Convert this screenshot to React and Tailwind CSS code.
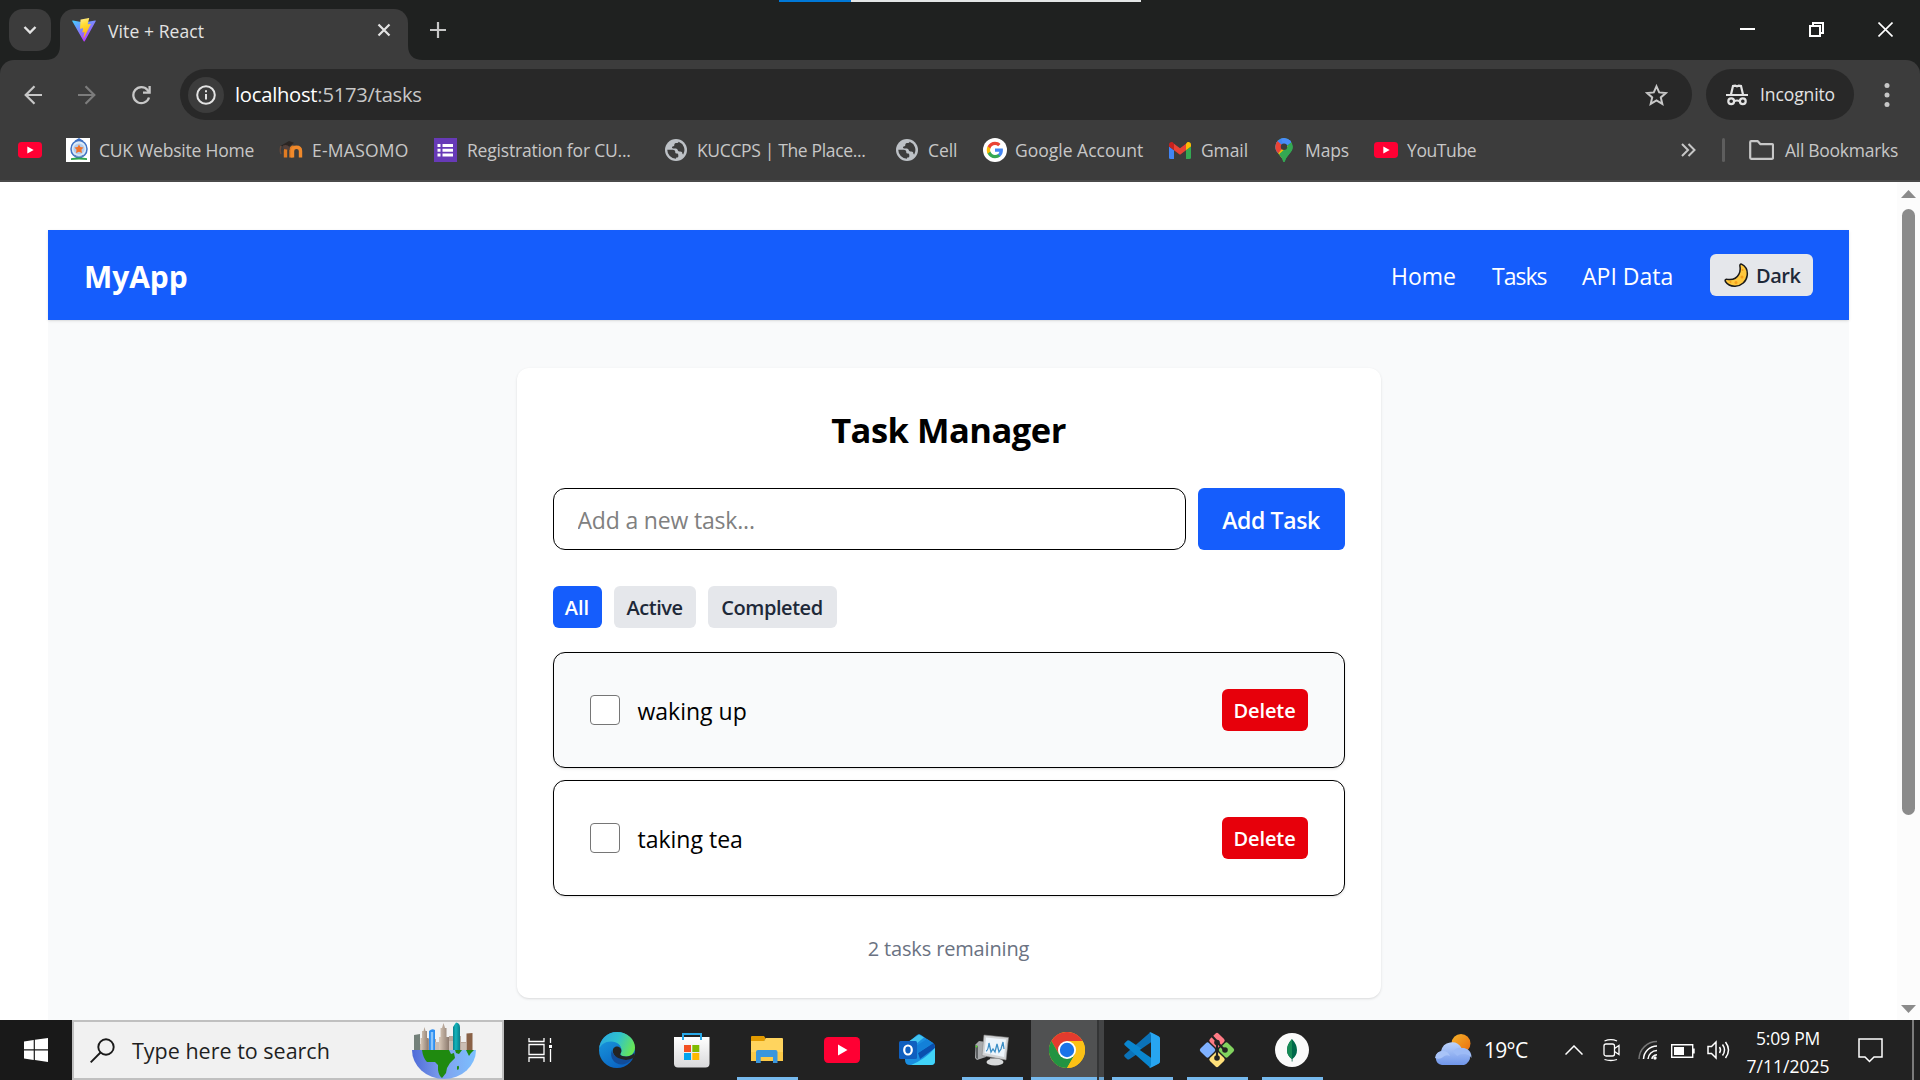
import React from "react";

/* ---------- Brand and browser icons ---------- */

const ViteLogo = () => (
  <svg width="24" height="24" viewBox="0 0 24 24">
    <defs>
      <linearGradient id="viteA" x1="0" y1="0" x2="0.6" y2="1">
        <stop offset="0" stopColor="#41d1ff" />
        <stop offset="1" stopColor="#bd34fe" />
      </linearGradient>
      <linearGradient id="viteB" x1="0.4" y1="0" x2="0.6" y2="1">
        <stop offset="0" stopColor="#ffea83" />
        <stop offset="0.3" stopColor="#ffdd35" />
        <stop offset="1" stopColor="#ffa800" />
      </linearGradient>
    </defs>
    <path d="M23.700 3.300 12.700 23.200c-.2.400-.8.400-1 0L.3 3.300c-.3-.4.100-1 .600-.9L12 4.400l11.100-2c.5-.1.900.4.600.9z" fill="url(#viteA)" />
    <path d="m17 0-8.200 1.600c-.2 0-.3.200-.3.300L8 10.500c0 .2.200.4.400.3l2.300-.5c.2 0 .4.200.4.400l-.7 3.300c0 .3.200.4.400.4l1.400-.4c.2-.1.500.1.400.3l-1.100 5.200c-.1.300.4.500.5.200l.1-.1 6.700-13.300c.1-.2-.1-.5-.4-.4l-2.300.4c-.2 0-.4-.2-.4-.4L17.200.3c.1-.2-.1-.3-.2-.3z" fill="url(#viteB)" />
  </svg>
);

const YouTube = ({ w = 24, h = 16, r = 4 }) => (
  <svg width={w} height={h} viewBox="0 0 36 26" preserveAspectRatio="none">
    <rect width="36" height="26" rx={r * 1.4} fill="#ff0033" />
    <path d="M14 7.500v11L23.500 13z" fill="#fff" />
  </svg>
);

const CukLogo = () => (
  <svg width="24" height="24" viewBox="0 0 24 24">
    <rect width="24" height="24" fill="#fff" />
    <ellipse cx="13" cy="11" rx="8" ry="8.500" fill="#dcebf8" stroke="#3f72c4" strokeWidth="1.500" />
    <path d="M9 3.500 13 1l4 2.500" stroke="#3f72c4" strokeWidth="1.500" fill="none" />
    <circle cx="13" cy="11" r="5.600" fill="#b3cdee" />
    <path d="m13 6.500 1.400 2.600 3.100.3-2.100 2.300.6 3.300-3-1.300-3 1.300.6-3.300-2.100-2.300 3.100-.3z" fill="#f0722a" />
    <path d="M8.500 16.500q4.500 3 9 0v2h-9z" fill="#5b83bd" />
    <path d="M5 20.200q3-.8 8-.8t8 .8v1.800q-3-.6-8-.6t-8 .6z" fill="#2fa64d" />
  </svg>
);

const MoodleLogo = () => (
  <svg width="24" height="20" viewBox="0 0 24 20">
    <path d="M6.500 17.500V11q0-2.500 1-3.500M12 17.500V10.500q0-3.500 2.500-3.500" stroke="#e07b22" strokeWidth="3.400" fill="none" />
    <path d="M13.500 17.500V11q0-3.800 4-3.800t4 3.800v6.500" stroke="#f0892b" strokeWidth="3.400" fill="none" />
    <path d="m1.500 6 8.500-5 5 1.800-5 4z" fill="#2b2522" />
    <path d="M2 6q-1.500 4 0 8" stroke="#6b4a39" strokeWidth="1.400" fill="none" />
    <path d="M4 5.500q4-1.500 6.500 1.500v3L4.500 9z" fill="#54403a" />
  </svg>
);

const FormsLogo = () => (
  <svg width="23" height="24" viewBox="0 0 23 24">
    <rect width="23" height="24" fill="#673ab7" />
    <path d="M3.500 6h3v3h-3zM8.500 6h10.500v3H8.500zM3.500 10.700h3v3h-3zM8.500 10.700h10.500v3H8.500zM3.500 15.400h3v3h-3zM8.500 15.400h10.500v3H8.500z" fill="#fff" />
  </svg>
);

const Globe = () => (
  <svg width="22" height="22" viewBox="0 0 22 22">
    <circle cx="11" cy="11" r="11" fill="#bdc1c6" />
    <path d="M2.300 10.700h5.400c2 0 2.600 1 2.600 2.700 0 .8.500 1 1.500 1 1.100 0 1.500.5 1.500 1.600v1.200c0 1-.7 1.400-1.500 1.400-.6 0-.8.4-.8 1.100A8.800 8.800 0 0 1 2.300 10.700zM13.600 2.700c-.3 1-.9 1.400-1.900 1.400-1.500 0-2.400.6-2.400 1.900 0 1-.5 1.300-1.500 1.400-.9.100-1 .9-.6 1.500.4.500 1.200.7 2.800.7 1.600 0 2.500.6 2.900 1.900.3.900 1 1 2.300 1 1.500 0 2.100.7 2.100 1.800 0 .7.300 1 .9 1.100a8.800 8.800 0 0 0-4.600-12.700z" fill="#3c3c3c" />
  </svg>
);

const GoogleG = () => (
  <svg width="24" height="24" viewBox="0 0 24 24">
    <circle cx="12" cy="12" r="12" fill="#fff" />
    <g transform="translate(3 3) scale(.75)">
      <path d="M22.560 12.250c0-.78-.07-1.530-.2-2.250H12v4.260h5.920c-.26 1.370-1.040 2.530-2.210 3.310v2.770h3.570c2.080-1.920 3.280-4.740 3.280-8.090z" fill="#4285f4" />
      <path d="M12 23c2.970 0 5.460-.98 7.280-2.660l-3.570-2.770c-.98.66-2.230 1.060-3.710 1.060-2.860 0-5.290-1.930-6.160-4.530H2.180v2.840C3.990 20.530 7.700 23 12 23z" fill="#34a853" />
      <path d="M5.840 14.090c-.22-.66-.35-1.360-.35-2.090s.13-1.430.35-2.090V7.070H2.180C1.430 8.550 1 10.220 1 12s.43 3.450 1.180 4.930z" fill="#fbbc05" />
      <path d="M12 5.380c1.620 0 3.060.56 4.210 1.640l3.150-3.150C17.450 2.090 14.970 1 12 1 7.700 1 3.990 3.470 2.180 7.070l3.660 2.840c.87-2.600 3.300-4.530 6.160-4.530z" fill="#ea4335" />
    </g>
  </svg>
);

const Gmail = () => (
  <svg width="22" height="17" viewBox="0 0 22 17">
    <path d="M0 4.500 5 8.300V17H1.500A1.500 1.500 0 0 1 0 15.500z" fill="#4285f4" />
    <path d="M17 8.300 22 4.500v11a1.500 1.500 0 0 1-1.500 1.500H17z" fill="#34a853" />
    <path d="M17 1.800v6.500l5-3.800V2.500C22 .4 19.600-.7 18 .5z" fill="#fbbc04" />
    <path d="M5 8.300V1.800l6 4.500 6-4.500v6.500l-6 4.500z" fill="#ea4335" />
    <path d="M0 2.500v2l5 3.800V1.800L4 .5C2.400-.7 0 .4 0 2.500z" fill="#c5221f" />
  </svg>
);

const MapsPin = () => (
  <svg width="18" height="24" viewBox="0 0 18 24">
    <defs>
      <clipPath id="pin"><path d="M9 0a8.700 8.700 0 0 1 8.700 8.700c0 3.300-1.600 5.200-3.600 7.600-2 2.400-3.300 4-4 6.600-.3 1-.6 1.100-1.100 1.100s-.8-.1-1.100-1.100c-.7-2.600-2-4.200-4-6.600C1.900 13.900.3 12 .3 8.700A8.700 8.700 0 0 1 9 0z" /></clipPath>
    </defs>
    <g clipPath="url(#pin)">
      <rect width="18" height="24" fill="#34a853" />
      <path d="M0 0h9L18 3 9 9 0 18z" fill="#4285f4" />
      <path d="M6 0 18 0 17 3.500 9 10z" fill="#4a8df8" />
      <path d="M-1 0 2.300 3.100 9 8.700 1 18z" fill="#ea4335" />
      <path d="M9 8.700 1 18l3.300 4L17 8z" fill="#fbbc04" />
      <path d="m17.200 4.500 2 5L9 24 3.900 16.200z" fill="#34a853" />
    </g>
    <circle cx="9" cy="8.700" r="3.200" fill="#3c3c3c" />
  </svg>
);

const Moon = () => (
  <svg width="25" height="25" viewBox="0 0 25 25">
    <path d="M17.500 1.200c4.200 2.200 6.300 6.500 5.700 11.100-.8 6.200-5.700 10.600-12 10.900-4 .2-7.700-1.600-9.800-4.700-.7-1.400.3-2.500 1.700-2.200 4.900.8 9.500-.8 11.700-4.900 1.600-2.900 1.600-5.700 1.100-8.300-.2-1.300.5-2.300 1.600-1.900z" fill="#ffc83d" stroke="#1a1a1a" strokeWidth="1.500" />
    <circle cx="18.500" cy="7" r="1" fill="#f59f1c" />
    <circle cx="18" cy="14" r="1.500" fill="#f59f1c" />
    <circle cx="12" cy="19.500" r="1.500" fill="#f59f1c" />
    <circle cx="6.500" cy="19" r="1" fill="#f59f1c" />
  </svg>
);

const Incognito = () => (
  <svg width="22" height="22" viewBox="0 0 22 22" fill="none" stroke="#e3e3e3" strokeWidth="2.200">
    <path d="M0 11h22" strokeWidth="2" />
    <path d="M5 10.500 7 2l2.200-.4 1.800.7 1.800-.7L15 2l2 8.500" />
    <circle cx="5.200" cy="17.300" r="2.900" />
    <circle cx="16.800" cy="17.300" r="2.900" />
    <path d="M8 17.200q3-1.400 6 0" />
  </svg>
);

/* ---------- Taskbar icons ---------- */

const WindowsLogo = () => (
  <svg width="24" height="24" viewBox="0 0 24 24" fill="#fff">
    <path d="M0 3.400 9.700 2v9.300H0zM10.900 1.800 24 0v11.300H10.900zM0 12.500h9.700v9.400L0 20.600zM10.900 12.500H24V24l-13.100-1.900z" />
  </svg>
);

const CityGlobe = () => (
  <svg width="64" height="57" viewBox="0 0 64 57">
    <defs>
      <linearGradient id="sea" x1="0" x2="1"><stop offset="0" stopColor="#4f6bd8" /><stop offset=".5" stopColor="#7fa2ee" /><stop offset="1" stopColor="#7cc0ff" /></linearGradient>
      <linearGradient id="stone" x1="0" x2="1"><stop offset="0" stopColor="#d9c9b8" /><stop offset="1" stopColor="#8c7a6e" /></linearGradient>
      <linearGradient id="tealTower" x1="0" x2="1"><stop offset="0" stopColor="#0b7f8c" /><stop offset=".4" stopColor="#12b5bb" /><stop offset="1" stopColor="#087c88" /></linearGradient>
    </defs>
    <path d="M8 28V22h6v-5h10v5h3v-6h10v-2h4v6h5v-6h3v6h5v8z" fill="#b9a79b" />
    <path d="M2 28V13l6-1v16z" fill="#74817a" />
    <path d="M8.500 28V16h1.500V9h1.500l1-4 1 4H15v7h1.500v12z" fill="url(#stone)" />
    <path d="M17 28V9q3-3 6-1v20z" fill="#2d8ff2" />
    <path d="M18.800 28V10h2.400v18z" fill="#8ec5fa" />
    <path d="M27 28V15h1.500V6H30l1.500-5L33 6h1.500v9H37v13z" fill="url(#stone)" />
    <path d="M41 28V5l3-4.500q4 .5 4 5V28z" fill="url(#tealTower)" />
    <path d="M54.500 28V11.500l6-.5v17z" fill="#8a6247" />
    <path d="M23 28v-8h4v8zM37 28v-9h4v9zM49 28v-7h5v7z" fill="#cbbdb3" />
    <path d="M0 28h64a32 29 0 0 1-64 0z" fill="url(#sea)" />
    <path d="M10 28h27l2 4 3-1 1 5-5 5-3 5-1 5-4 5q-3-2-4-8v-5l-3-3h-8q-4-4-5-12z" fill="#1f8a0f" />
    <path d="M45 44.500q2-2 2 1t-2 2zM43 28h7l-3 4-3-1zM54 28h8l-3 3-2 3z" fill="#1f8a0f" />
  </svg>
);

const Edge = () => (
  <svg width="36" height="36" viewBox="0 0 36 36">
    <defs>
      <linearGradient id="edgeA" x1="0" y1=".2" x2="1" y2=".5"><stop offset="0" stopColor="#2aa7df" /><stop offset=".5" stopColor="#2fc2cf" /><stop offset="1" stopColor="#68e655" /></linearGradient>
      <linearGradient id="edgeB" x1="0" y1="0" x2=".6" y2="1"><stop offset="0" stopColor="#1b9fe0" /><stop offset="1" stopColor="#0a63c2" /></linearGradient>
    </defs>
    <circle cx="18" cy="18" r="18" fill="url(#edgeB)" />
    <path d="M.1 17C1 7 8.500 0 18 0c10.300 0 18 7.500 18 15.500 0 5-3.700 9-8.700 9-4 0-6.300-1.500-5.800-2.700.3-.8 1-1.600 1-3.800 0-4.500-4.300-8.500-10.500-8.500C6 9.500 1.500 13 .1 17z" fill="url(#edgeA)" />
    <path d="M13 18c-3.500 8.500 4 16 12 14.200 4-1 7-3.700 8.500-6-4 1.800-8.500 2.300-12.200.6C17 25 13 22.500 13 18z" fill="#124c98" />
    <path d="M14 20.500c-1-4.300 2-6.500 4.500-6 2.800.6 4.500 3 3.700 5.500-.5 1.400-1.200 2-.8 2.800.5 1 3.600 2 6.600 1.700 3.500-.3 5.600-1.700 6.600-3l1 0-.7 4q-.3 1-1.500 1c-4 1.800-8.500 1.800-12.300.3-3.500-1.400-6.500-3.300-7.100-6.300z" fill="#242424" />
  </svg>
);

const Store = () => (
  <svg width="36" height="36" viewBox="0 0 36 36">
    <defs><linearGradient id="bag" x1="0" y1="0" x2="0" y2="1"><stop offset="0" stopColor="#fff" /><stop offset="1" stopColor="#d9d9db" /></linearGradient></defs>
    <path d="M0 5h35.500v26.500q0 4-4 4H4q-4 0-4-4z" fill="url(#bag)" />
    <path d="M9 8V2h18v6" fill="none" stroke="#29a9e8" strokeWidth="2" />
    <path d="M10 13h7v7h-7z" fill="#f25022" /><path d="M18.300 13h7v7h-7z" fill="#7fba00" />
    <path d="M10 21h7v7h-7z" fill="#00a4ef" /><path d="M18.300 21h7v7h-7z" fill="#ffb900" />
  </svg>
);

const Explorer = () => (
  <svg width="32" height="28" viewBox="0 0 32 28">
    <path d="M0 1q0-1 1-1h12l2 3-2 2H0z" fill="#e29a00" />
    <path d="M0 5h13l2-3h16q1 0 1 1v22H0z" fill="#ffd45e" />
    <path d="M0 16h32v9H0z" fill="#fcca48" />
    <path d="M5 27V16q0-2 2-2h17.500q2 0 2 2v11H22v-6H9.700v6z" fill="#3a96dd" />
  </svg>
);

const Outlook = () => (
  <svg width="36" height="32" viewBox="0 0 36 32">
    <path d="M6 11 18 1q2-1.500 4 0l12 8q2 1.500 2 4v14q0 4-4 4H11q-5 0-5-5z" fill="#1a8ee0" />
    <path d="M6 10 20 .5l5 3L12 14z" fill="#42c4ee" />
    <path d="M19 19 34.500 9q1.500 2 1.500 5L21 25z" fill="#0a4fae" />
    <path d="M14 14 28 5l6 4-15 10z" fill="#1380d8" />
    <path d="M12 31q13-5 24-17v13q0 4-4 4z" fill="#41d3f8" />
    <rect y="7" width="18" height="18" rx="1.500" fill="#0f5fbf" />
    <ellipse cx="9" cy="16" rx="3.800" ry="4.500" fill="none" stroke="#fff" strokeWidth="2.200" />
  </svg>
);

const PerfMon = () => (
  <svg width="34" height="32" viewBox="0 0 34 32">
    <path d="m0 11 4-4 7 1v15l-9 3-2-2z" fill="#a9abad" /><path d="m0 11 3 1v13l-2-1z" fill="#5d6062" />
    <circle cx="1.500" cy="12.500" r="1" fill="#52e02a" />
    <path d="M9 1 33.500 3.500 31 26 7 21.500z" fill="#d2d4d6" stroke="#888" strokeWidth=".6" />
    <path d="m11 3.500 20 2L29 23 9.500 19z" fill="#eef5fb" />
    <path d="M11 17q2 0 3-8l2 9 2-3 2 3 2-8 2 8 2-3 2-7 1 7" fill="none" stroke="#3d8fc6" strokeWidth="1.300" />
    <path d="m15 24 8 1v3h-8z" fill="#9b9ea0" /><ellipse cx="20" cy="28" rx="8.500" ry="3.600" fill="#d8dadb" />
  </svg>
);

const Chrome = () => (
  <svg width="36" height="36" viewBox="0 0 36 36">
    <circle cx="18" cy="18" r="18" fill="#fbc116" />
    <path d="M2.400 9A18 18 0 0 1 33.600 9H18L10.200 22.500z" fill="#e33b2e" />
    <path d="M2.400 9A18 18 0 0 0 18 36l7.800-13.500L18 26l-7.800-3.500z" fill="#229342" />
    <path d="M18 9h15.600A18 18 0 0 1 18 36l7.800-13.500z" fill="#fbc116" />
    <circle cx="18" cy="18" r="9" fill="#fff" />
    <circle cx="18" cy="18" r="7.200" fill="#1a73e8" />
  </svg>
);

const VsCode = () => (
  <svg width="36" height="36" viewBox="0 0 36 36">
    <path d="M26 .4 34.500 4.500Q36 5.300 36 7L5.300 27.200q-1 .8-2 0L.8 25q-1.200-1.200 0-2.400z" fill="#0b72b8" />
    <path d="M36 29q0 1.700-1.500 2.500L26 35.600.8 13.200q-1.200-1.200 0-2.300l2.500-2.300q1-.8 2 0z" fill="#0a86cf" />
    <path d="M27 10.200v15.600L15.800 18z" fill="#232323" />
    <path d="M26.500.3Q27 .3 34.500 4.300 36 5 36 6.700v22.600q0 1.700-1.500 2.400-7.500 4-8 4-1.500 0-.9-.5 1.400-.6 1.400-2.500V3.300q0-1.900-1.400-2.500-.4-.4.900-.5z" fill="#27a5f1" />
  </svg>
);

const GitBash = () => (
  <svg width="36" height="36" viewBox="0 0 36 36">
    <g transform="rotate(45 18 18)">
      <rect x="5.300" y="5.300" width="12" height="12" rx="2" fill="#ff7b85" />
      <rect x="18.700" y="5.300" width="12" height="12" rx="2" fill="#82d35f" />
      <rect x="5.300" y="18.700" width="12" height="12" rx="2" fill="#7fb1ff" />
      <rect x="18.700" y="18.700" width="12" height="12" rx="2" fill="#ffe07a" />
    </g>
    <path d="m12 3 6 6.500V27M18 10l7.500 8" stroke="#232323" strokeWidth="2.200" fill="none" />
    <circle cx="18" cy="10.500" r="2.800" fill="#232323" /><circle cx="26" cy="18" r="2.800" fill="#232323" /><circle cx="18" cy="26" r="2.800" fill="#232323" />
  </svg>
);

const Mongo = () => (
  <svg width="34" height="34" viewBox="0 0 34 34">
    <circle cx="17" cy="17" r="17" fill="#fafafa" />
    <path d="M17 6q5 5.500 5 11 0 5.500-4.500 9v2.500h-.8V26Q12 22.500 12 17q0-5.500 5-11z" fill="#00684a" />
    <path d="M17 6v20q-5-3.500-5-9t5-11z" fill="#178a55" />
  </svg>
);

const Weather = () => (
  <svg width="37" height="32" viewBox="0 0 37 32">
    <defs>
      <linearGradient id="sun" x1="0" y1="0" x2="1" y2="1"><stop offset="0" stopColor="#f5b32a" /><stop offset="1" stopColor="#e96a0c" /></linearGradient>
      <linearGradient id="cloud" x1="0" y1="0" x2="0" y2="1"><stop offset="0" stopColor="#bcd3fb" /><stop offset="1" stopColor="#7096ea" /></linearGradient>
    </defs>
    <circle cx="26" cy="9.500" r="9.500" fill="url(#sun)" />
    <path d="M7 31a7 7 0 0 1-1-13.700A11 11 0 0 1 26.500 14 8.700 8.700 0 0 1 29 31z" fill="url(#cloud)" />
    <path d="M18 18q3-5 8.500-4A8.700 8.700 0 0 1 36.300 24q-2-4-8-4-4 0-6 2z" fill="#9dbbf6" />
    <path d="M0 24q1-7 8-7 5 0 7 5-4-2-7 1t-8 1z" fill="#a9c4f8" />
  </svg>
);

/* ---------- Browser chrome ---------- */

const TabStrip = () => (
  <div className="flex h-[60px] bg-[#1f2120] relative">
    <div className="absolute left-[779px] top-0 h-[2px] w-[362px] bg-[#e3e6e6]">
      <div className="h-full w-[72px] bg-[#0078d7]" />
    </div>
    <div className="mt-[9px] ml-[9px] flex h-[42px] w-[42px] items-center justify-center rounded-[14px] bg-[#3c3c3c]">
      <svg width="14" height="10" viewBox="0 0 14 10" fill="none" stroke="#e3e3e3" strokeWidth="2.400"><path d="m1.500 2 5.500 5.500L12.500 2" /></svg>
    </div>
    <svg className="mt-[45px] ml-[-6px]" width="15" height="15" viewBox="0 0 15 15"><path d="M15 0v15H0Q15 15 15 0z" fill="#3c3c3c" /></svg>
    <div className="mt-[9px] flex h-[51px] w-[348px] items-center rounded-t-[14px] bg-[#3c3c3c] pr-[17px] pb-[9px] pl-3">
      <ViteLogo />
      <span className="mt-[3px] ml-3 flex-1 text-[17.500px] tracking-[0.100px] text-[#e3e3e3]">Vite + React</span>
      <svg width="14" height="14" viewBox="0 0 14 14" stroke="#e3e3e3" strokeWidth="2.200"><path d="m1.500 1.500 11 11M12.500 1.500l-11 11" /></svg>
    </div>
    <svg className="mt-[45px]" width="15" height="15" viewBox="0 0 15 15"><path d="M0 0v15h15Q0 15 0 0z" fill="#3c3c3c" /></svg>
    <svg className="mt-[22px] ml-[7px]" width="16" height="16" viewBox="0 0 16 16" stroke="#c7c7c7" strokeWidth="2.200"><path d="M8 0v16M0 8h16" /></svg>
    <div className="mt-[22px] mr-[27px] ml-auto flex gap-[54px]">
      <svg width="15" height="15" viewBox="0 0 15 15" stroke="#fff" strokeWidth="2"><path d="M0 7h15" /></svg>
      <svg width="15" height="15" viewBox="0 0 15 15" stroke="#fff" strokeWidth="2" fill="none"><path d="M1 4h10v10H1zM4 4V1h10v10h-3" /></svg>
      <svg width="15" height="15" viewBox="0 0 15 15" stroke="#fff" strokeWidth="1.600"><path d="m.5.5 14 14M14.500.5l-14 14" /></svg>
    </div>
  </div>
);

const AddressBar = () => (
  <div className="flex h-[60px] items-start rounded-t-[14px] bg-[#3c3c3c] pt-[9px]">
    <div className="flex h-[51px] w-[180px] items-center pl-6">
      <svg width="18" height="22" viewBox="0 0 18 22" fill="none" stroke="#c7c7c7" strokeWidth="2.200"><path d="M18 11H2M10.500 2.200 1.700 11l8.800 8.800" /></svg>
      <svg className="ml-9" width="18" height="22" viewBox="0 0 18 22" fill="none" stroke="#7c7c7c" strokeWidth="2.200"><path d="M0 11h16M7.500 2.200l8.800 8.800-8.800 8.800" /></svg>
      <svg className="ml-9" width="19" height="20" viewBox="0 0 19 20" fill="none" stroke="#c7c7c7" strokeWidth="2.300"><path d="M17 12.500A8 8 0 1 1 15.500 5L17 7" /><path d="M17.600 1v6.700H11" /></svg>
    </div>
    <div className="flex h-[51px] w-[1512px] items-center rounded-full bg-[#282828] pr-[24px] pl-[8px]">
      <div className="flex h-9 w-9 items-center justify-center rounded-full bg-[#3c3c3c]">
        <svg width="20" height="20" viewBox="0 0 20 20" fill="none" stroke="#e3e3e3" strokeWidth="2"><circle cx="10" cy="10" r="8.800" /><path d="M10 9v5.500M10 5.300v2" /></svg>
      </div>
      <div className="ml-[11px] flex-1 text-[20.200px] tracking-[-0.250px] text-[#c7c7c7]"><span className="text-white">localhost</span>:5173/tasks</div>
      <svg width="23" height="22" viewBox="0 0 23 22" fill="none" stroke="#c7c7c7" strokeWidth="2"><path d="m11.500 2.300 2.700 6.100 6.600.6-5 4.400 1.500 6.500-5.800-3.500-5.800 3.500 1.500-6.500-5-4.400 6.600-.6z" /></svg>
    </div>
    <div className="ml-[14px] flex h-[51px] w-[148px] items-center rounded-full bg-[#282828] pl-5">
      <Incognito />
      <span className="ml-3 text-[17.500px] tracking-[-0.100px] text-[#e3e3e3]">Incognito</span>
    </div>
    <svg className="mt-[13px] ml-[30px]" width="6" height="26" viewBox="0 0 6 26" fill="#c7c7c7"><circle cx="3" cy="3.500" r="2.500" /><circle cx="3" cy="13" r="2.500" /><circle cx="3" cy="22.500" r="2.500" /></svg>
  </div>
);

const Bookmark = ({ icon, label, box, gap }) => (
  <div className={`flex shrink-0 items-center ${box}`}>
    {icon}
    <span className={`whitespace-nowrap ${gap}`}>{label}</span>
  </div>
);

const BookmarksBar = () => (
  <div className="flex h-[62px] items-start border-b-2 border-[#4a4a4a] bg-[#3c3c3c] pl-[18px] text-[17.500px] text-[#c7c7c7]">
    <div className="flex h-[60px] w-full items-center">
      <div className="w-12 shrink-0"><YouTube /></div>
      <Bookmark icon={<CukLogo />} label="CUK Website Home" box="w-[213px]" gap="ml-[9px] tracking-[-0.220px]" />
      <Bookmark icon={<MoodleLogo />} label="E-MASOMO" box="w-[155px]" gap="ml-[9px] tracking-[0.250px]" />
      <Bookmark icon={<FormsLogo />} label="Registration for CU..." box="w-[231px]" gap="ml-[10px] tracking-[-0.200px]" />
      <Bookmark icon={<Globe />} label="KUCCPS | The Place..." box="w-[231px]" gap="ml-[10px] tracking-[-0.350px]" />
      <Bookmark icon={<Globe />} label="Cell" box="w-[87px]" gap="ml-[10px] tracking-[-0.100px]" />
      <Bookmark icon={<GoogleG />} label="Google Account" box="w-[186px]" gap="ml-2" />
      <Bookmark icon={<Gmail />} label="Gmail" box="w-[106px]" gap="ml-[10px] tracking-[-0.100px]" />
      <Bookmark icon={<MapsPin />} label="Maps" box="w-[99px]" gap="ml-[12px] tracking-[-0.100px]" />
      <Bookmark icon={<YouTube />} label="YouTube" box="w-[307px]" gap="ml-[9px] tracking-[-0.400px]" />
      <svg className="shrink-0" width="15" height="14" viewBox="0 0 15 14" fill="none" stroke="#c7c7c7" strokeWidth="2"><path d="m1 1 6 6-6 6M7.500 1l6 6-6 6" /></svg>
      <div className="ml-[26px] h-6 w-[3px] shrink-0 rounded bg-[#5e5e5e]" />
      <svg className="ml-6 shrink-0" width="25" height="20" viewBox="0 0 25 20" fill="none" stroke="#c7c7c7" strokeWidth="2.200" strokeLinejoin="round"><path d="M1.200 2.200q0-1 1-1h6.600l2.700 3H23q1 0 1 1v12.600q0 1-1 1H2.200q-1 0-1-1z" /></svg>
      <span className="ml-[11px] tracking-[-0.280px] whitespace-nowrap">All Bookmarks</span>
    </div>
  </div>
);

/* ---------- Task manager page ---------- */

const TASKS = [
  { id: 1, label: "waking up", tone: "bg-gray-50" },
  { id: 2, label: "taking tea", tone: "bg-white" },
];

const NavBar = () => (
  <nav className="flex h-[90px] items-center bg-[#155dfc] px-9 text-white shadow">
    <span className="mt-[3px] text-[30px] font-bold tracking-[-0.100px]">MyApp</span>
    <div className="ml-auto flex items-center gap-9 text-[23px] whitespace-nowrap">
      <a className="w-[65px] pt-[3px]">Home</a>
      <a className="w-[54px] pt-[3px] tracking-[-1px]">Tasks</a>
      <a className="w-[92px] pt-[3px]">API Data</a>
      <button className="flex h-[42px] w-[103px] items-center rounded-md bg-gray-200 pl-[14px] text-[20px] font-semibold text-gray-800">
        <Moon />
        <span className="mt-[2px] ml-[7px] tracking-[-0.500px]">Dark</span>
      </button>
    </div>
  </nav>
);

const TaskRow = ({ label, tone }) => (
  <li className={`flex h-[116px] items-center rounded-xl border border-black px-9 shadow ${tone}`}>
    <span className="h-[30px] w-[30px] rounded-[4px] border-[1.500px] border-[#767676] bg-white" />
    <span className="mt-[3px] ml-[18px] flex-1 text-[23px] text-black">{label}</span>
    <button className="h-[42px] w-[86px] rounded-md bg-[#e7000b] pt-[2px] text-[20px] font-semibold tracking-[-0.100px] text-white">Delete</button>
  </li>
);

const TaskCard = () => (
  <section className="mx-auto mt-12 h-[630px] w-[864px] rounded-xl bg-white px-9 pt-9 shadow">
    <h1 className="h-[54px] text-center text-[34.500px] leading-[51px] font-bold tracking-[-0.500px] text-black">Task Manager</h1>
    <div className="mt-[30px] flex gap-3">
      <input placeholder="Add a new task..." className="h-[62px] w-[633px] rounded-xl border border-black px-6 pt-[2px] text-[23px] tracking-[-0.180px] text-black placeholder:text-[#808080]" />
      <button className="h-[62px] w-[147px] rounded-md bg-[#155dfc] pt-[2px] text-[23px] font-semibold tracking-[-0.350px] text-white">Add Task</button>
    </div>
    <div className="mt-9 flex gap-3 text-[20px] font-semibold">
      <button className="h-[42px] w-[49px] rounded-md bg-[#155dfc] pt-[2px] text-white">All</button>
      <button className="h-[42px] w-[82px] rounded-md bg-gray-200 pt-[2px] tracking-[-0.500px] text-gray-800">Active</button>
      <button className="h-[42px] w-[129px] rounded-md bg-gray-200 pt-[2px] tracking-[-0.450px] text-gray-800">Completed</button>
    </div>
    <ul className="mt-6 flex flex-col gap-3">
      {TASKS.map((t) => <TaskRow key={t.id} label={t.label} tone={t.tone} />)}
    </ul>
    <p className="mt-[38px] text-center text-[20px] leading-[30px] tracking-[-0.150px] text-gray-500">2 tasks remaining</p>
  </section>
);

const ScrollBar = () => (
  <div className="flex w-[23px] flex-col items-center bg-[#fcfcfc] py-[7px]">
    <svg className="mt-px" width="15" height="8" viewBox="0 0 15 8"><path d="M7.500 0 15 8H0z" fill="#8b8b8b" /></svg>
    <div className="mt-[11px] h-[606px] w-[13px] rounded-full bg-[#8b8b8b]" />
    <svg className="mt-auto" width="15" height="8" viewBox="0 0 15 8"><path d="M7.500 8 15 0H0z" fill="#8b8b8b" /></svg>
  </div>
);

const Page = () => (
  <div className="flex h-[838px] overflow-hidden bg-white">
    <div className="flex-1 pt-12 pr-12 pl-12">
      <div className="h-[800px] bg-gray-50">
        <NavBar />
        <TaskCard />
      </div>
    </div>
    <ScrollBar />
  </div>
);

/* ---------- Windows taskbar ---------- */

const Slot = ({ children, open }) => (
  <div className="flex h-full w-[75px] flex-col items-center">
    <div className="flex h-[57px] items-center justify-center pt-[3px]">{children}</div>
    {open && <div className="ml-[2px] h-[3px] w-[61px] bg-[#76b9ed]" />}
  </div>
);

const TaskBar = () => (
  <footer className="flex h-[60px] bg-[#222222]">
    <div className="flex w-[72px] items-center justify-center bg-[#191919]"><WindowsLogo /></div>
    <div className="flex w-[432px] items-center border-2 border-[#c0c0c0] bg-[#f1f1f1] pl-4">
      <svg width="25" height="25" viewBox="0 0 25 25" fill="none" stroke="#1a1a1a" strokeWidth="1.900"><circle cx="16" cy="9" r="7.700" /><path d="M10.500 14.500.7 24.300" /></svg>
      <span className="mt-[3px] ml-[17px] w-[280px] text-[21.500px] text-[#1f1f1f]">Type here to search</span>
      <CityGlobe />
    </div>
    <div className="flex w-[75px] items-center justify-center">
      <svg className="mr-[3px]" width="25" height="24" viewBox="0 0 25 24" fill="none" stroke="#fff" strokeWidth="1.300"><path d="M1 0v3.500h15V0M1 6.500h15v10H1zM1 24v-4.500h15V24M22.500 0v5M22.500 11v13" /><rect x="21" y="7" width="3" height="3" fill="#fff" stroke="none" /></svg>
    </div>
    <Slot><Edge /></Slot>
    <Slot><Store /></Slot>
    <Slot open><Explorer /></Slot>
    <Slot><YouTube w={36} h={26} r={3} /></Slot>
    <Slot><Outlook /></Slot>
    <Slot open><PerfMon /></Slot>
    <div className="ml-[2px] flex w-[66px] flex-col items-center bg-[#505152]">
      <div className="flex h-[57px] items-center pt-[3px] pl-[6px]"><Chrome /></div>
      <div className="h-[3px] w-full bg-[#76b9ed]" />
    </div>
    <div className="flex w-[7px] flex-col border-l-2 border-[#343536] bg-[#434445]"><div className="mt-auto h-[3px] w-full bg-[#6ba5d2]" /></div>
    <Slot open><VsCode /></Slot>
    <Slot open><GitBash /></Slot>
    <Slot open><Mongo /></Slot>
    <div className="mr-[6px] ml-auto flex items-center">
      <Weather />
      <span className="mt-[2px] ml-[12px] w-[81px] text-[21px] tracking-[-0.700px] text-white">19°C</span>
      <svg width="18" height="10" viewBox="0 0 18 10" fill="none" stroke="#fff" strokeWidth="1.500"><path d="m.5 9.500 8.500-8.500 8.500 8.500" /></svg>
      <svg className="ml-5" width="17" height="24" viewBox="0 0 17 24" fill="none" stroke="#fff" strokeWidth="1.300"><rect x="1" y="6" width="10.500" height="12" rx="2" /><path d="m11.500 10.500 4.500-3v9l-4.500-3M1.500 3Q8 .3 14 3M1.500 21.500q6.500 2 12.500 0" /></svg>
      <svg className="ml-[18px]" width="19" height="20" viewBox="0 0 19 20" fill="none" stroke="#fff" strokeWidth="1.500"><path d="M1 19A18 18 0 0 1 19 1.500" stroke="#777" /><path d="M5.500 19A13.500 13.500 0 0 1 19 6M10 19a9 9 0 0 1 9-8.500" /><path d="M14 19q0-3.500 5-4.200" /><circle cx="17" cy="18" r="1.700" fill="#fff" stroke="none" /></svg>
      <svg className="mt-px ml-[14px]" width="24" height="14" viewBox="0 0 24 14" fill="none" stroke="#fff" strokeWidth="1.400"><path d="M.7.700h21v12.600h-21zM23 4.500v5" /><path d="M3 3h10v8H3z" fill="#fff" stroke="none" /></svg>
      <svg className="ml-[12px]" width="24" height="20" viewBox="0 0 24 20" fill="none" stroke="#fff" strokeWidth="1.500"><path d="M1 6.500h3.500L9 2v16l-4.500-4.500H1zM12.500 7q2 3 0 6M15.500 4.500q4 5.500 0 11" /><path d="M18.500 2q6 8 0 16" /></svg>
      <div className="mt-[3px] ml-[11px] w-[92px] text-center text-[17.500px] leading-7 whitespace-nowrap text-white"><span className="tracking-[-0.200px]">5:09 PM</span><br />7/11/2025</div>
      <svg className="ml-[24px]" width="25" height="25" viewBox="0 0 25 25" fill="none" stroke="#fff" strokeWidth="1.500"><path d="M1 1h23v18H16l-4.500 4.500L7 19H1z" /></svg>
      <div className="ml-[29px] h-[60px] w-[2px] bg-[#7b7b7b]" />
    </div>
  </footer>
);

export default function App() {
  return (
    <div className="h-[1080px] w-[1920px] overflow-hidden bg-[#1f2120] font-['Open_Sans','Noto_Sans',sans-serif]">
      <TabStrip />
      <AddressBar />
      <BookmarksBar />
      <Page />
      <TaskBar />
    </div>
  );
}
